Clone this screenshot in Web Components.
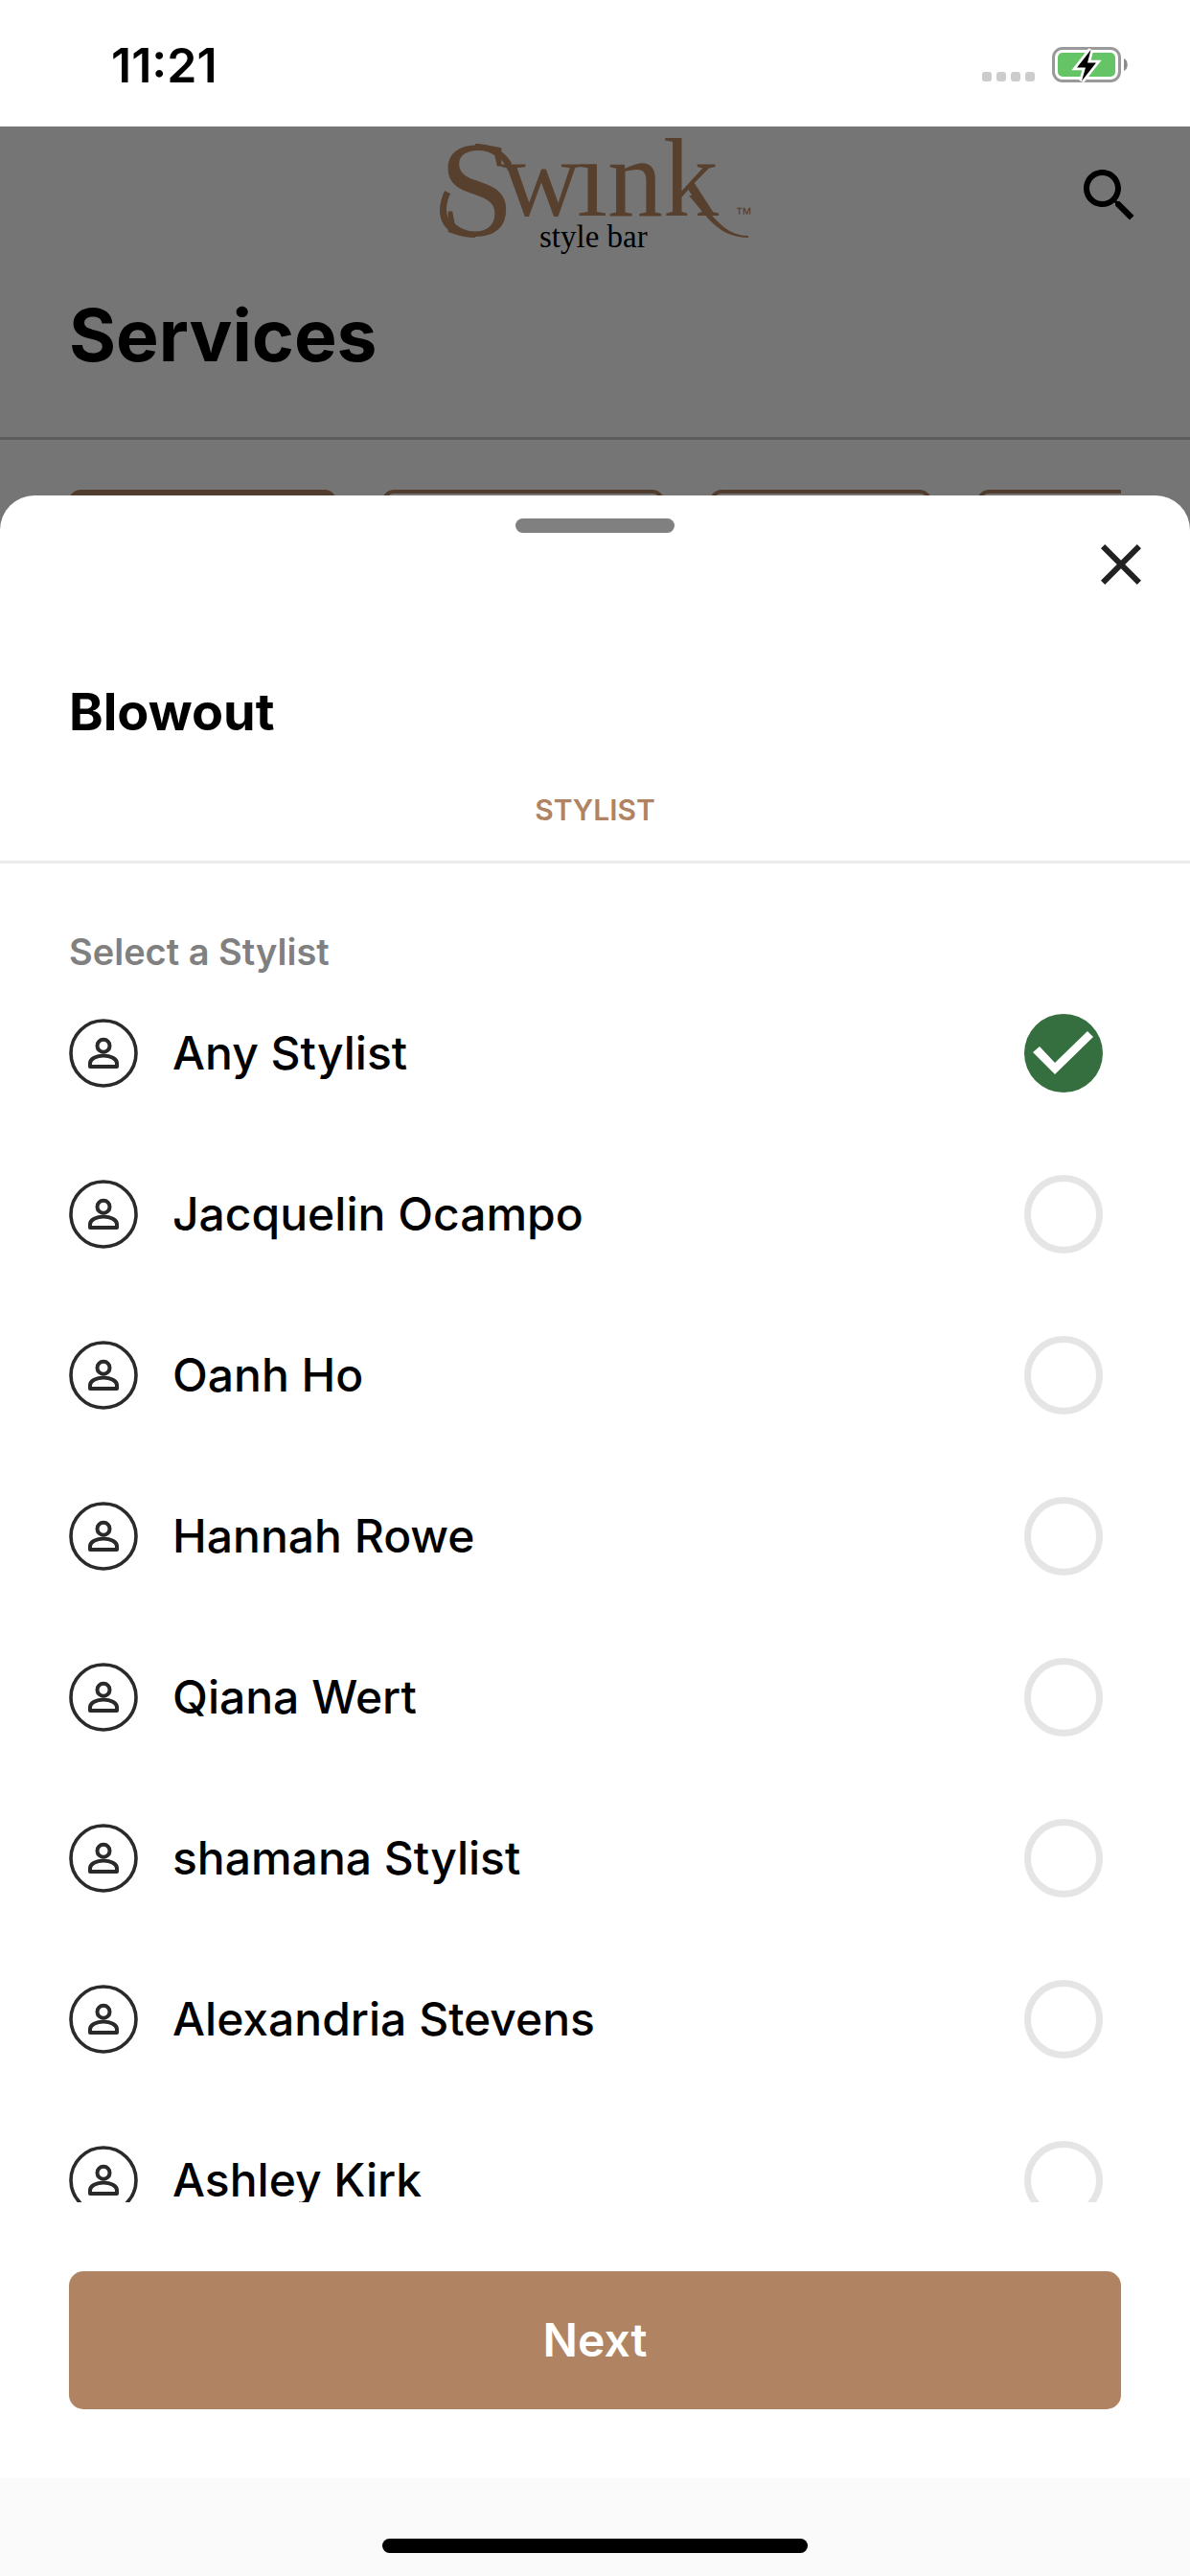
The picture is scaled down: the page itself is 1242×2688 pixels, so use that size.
<!DOCTYPE html>
<html lang="en">
<head>
<meta charset="utf-8">
<meta name="viewport" content="width=device-width, initial-scale=1">
<title>Swink style bar – Services</title>
<style>
  :root {
    --brand: #b08463;
    --ink: #212121;
    --muted: #808080;
    --gutter: 72px;
  }
  body { margin: 0; background: #fff; color: #000; font-family: Inter, "Liberation Sans", sans-serif; }
</style>
</head>
<body>
<app-shell>
  <status-bar slot="status" time="11:21"></status-bar>
  <services-page slot="page"></services-page>
  <booking-sheet slot="sheet" heading="Blowout" step="Stylist">
    <stylist-picker></stylist-picker>
  </booking-sheet>
</app-shell>

<script>
const define = (name, html, setup) => {
  const template = document.createElement('template');
  template.innerHTML = html;
  customElements.define(name, class extends HTMLElement {
    connectedCallback() {
      if (this.shadowRoot) return;
      const root = this.attachShadow({ mode: 'open' });
      root.append(template.content.cloneNode(true));
      if (setup) setup(this, root);
    }
  });
};

define('app-shell', `
  <style>
    :host { display: flex; flex-direction: column; height: 100vh; }
    main { flex: 1; min-height: 0; display: grid; grid-template: minmax(0, 1fr) / minmax(0, 1fr); }
    .scrim { grid-area: 1 / 1; background: rgba(0, 0, 0, .54); z-index: 1; }
    ::slotted([slot="page"]) { grid-area: 1 / 1; min-height: 0; }
    ::slotted([slot="sheet"]) { grid-area: 1 / 1; z-index: 2; margin-top: 385px; min-height: 0; }
  </style>
  <slot name="status"></slot>
  <main>
    <slot name="page"></slot>
    <div class="scrim"></div>
    <slot name="sheet"></slot>
  </main>`);

define('status-bar', `
  <style>
    :host { display: flex; justify-content: space-between; align-items: center; height: 132px; padding: 0 64px 0 116px; background: #fff; }
    time { font-size: 50px; line-height: 60px; font-weight: 600; padding-top: 4px; }
    .icons { display: flex; align-items: flex-end; gap: 18px; padding-top: 4px; }
    .signal { display: flex; gap: 5px; padding-bottom: 3px; }
    .signal i { width: 10px; height: 10px; border-radius: 3px; background: #ccc; }
    svg { display: block; }
  </style>
  <time></time>
  <div class="icons">
    <div class="signal"><i></i><i></i><i></i><i></i></div>
    <svg width="80" height="40" viewBox="0 0 80 40" aria-label="Battery charging">
      <rect x="1.5" y="2.5" width="69" height="34" rx="9.5" fill="none" stroke="#999" stroke-width="3"/>
      <rect x="6" y="7" width="60" height="25" rx="5" fill="#65c466"/>
      <path d="M75 13c5 2 5 11 0 13z" fill="#8c8c8c"/>
      <path d="M40.500 4 26 22.500h9L31 36.500 46 17.500H37z" fill="#000" stroke="#fff" stroke-width="5.500" paint-order="stroke"/>
    </svg>
  </div>`, (el, root) => { root.querySelector('time').textContent = el.getAttribute('time'); });

define('swink-logo', `
  <style>:host { display: block; } svg { display: block; overflow: visible; }</style>
  <svg width="330" height="144" viewBox="456 132 330 144" role="img" aria-label="Swink style bar">
    <g fill="#c08c66" font-family="'Liberation Serif', serif">
      <text y="246" font-size="142"><tspan x="458">S</tspan><tspan x="523" y="225" font-size="116">w</tspan><tspan x="602" y="225" font-size="116">i</tspan><tspan x="634" y="225" font-size="116">n</tspan><tspan x="692" y="225" font-size="116">k</tspan></text>
      <path d="M496 150c18 0 30 7 38 20l-4 8c-8-17-18-25-34-25z"/>
      <path d="M464 199l6 3c-8 18-6 37 26 44v2c-32 0-45-20-32-49z"/>
      <path d="M724 204l22 24c11 12 21 18 35 18v2c-17 0-30-7-42-20l-20-24z"/>
      <text x="767" y="229" font-size="18" font-family="'Liberation Sans', sans-serif">™</text>
    </g>
    <rect x="607" y="136" width="22" height="30" fill="#fff"/>
    <text x="563" y="258" font-size="33" font-family="'Liberation Serif', serif" fill="#000">style bar</text>
  </svg>`);

define('category-chip', `
  <style>
    :host { display: block; flex: none; }
    button { display: block; width: 100%; height: 96px; border: 4px solid var(--brand); border-radius: 12px; background: #fff; padding: 0; }
    :host([selected]) button { background: var(--brand); }
  </style>
  <button type="button" aria-label="Category"></button>`);

define('services-page', `
  <style>
    :host { display: block; background: #fff; overflow: hidden; }
    .bar { display: grid; grid-template-columns: 1fr auto 1fr; align-items: center; height: 144px; padding: 0 48px; }
    .bar swink-logo { grid-column: 2; }
    .bar button { grid-column: 3; justify-self: end; border: 0; padding: 0; background: none; }
    svg { display: block; }
    header { border-bottom: 3px solid #c8c8c8; }
    h1 { margin: 0; padding: 26px var(--gutter) 58px; font-size: 75px; line-height: 96px; font-weight: 700; }
    nav { display: flex; gap: 48px; margin: 52px var(--gutter) 0; overflow: hidden; }
    .a { width: 279px; } .b { width: 294px; } .c { width: 231px; } .d { width: 260px; }
  </style>
  <header>
    <div class="bar">
      <swink-logo></swink-logo>
      <button type="button" aria-label="Search">
        <svg width="72" height="72" viewBox="0 0 24 24"><path d="M15.500 14h-.79l-.28-.27C15.410 12.590 16 11.110 16 9.500 16 5.910 13.090 3 9.500 3S3 5.910 3 9.500 5.910 16 9.500 16c1.610 0 3.090-.59 4.230-1.570l.27.28v.79l5 4.990L20.490 19l-4.990-5zm-6 0C7.010 14 5 11.990 5 9.500S7.010 5 9.500 5 14 7.010 14 9.500 11.990 14 9.500 14z"/></svg>
      </button>
    </div>
    <h1>Services</h1>
  </header>
  <nav>
    <category-chip class="a" selected></category-chip>
    <category-chip class="b"></category-chip>
    <category-chip class="c"></category-chip>
    <category-chip class="d"></category-chip>
  </nav>`);

define('booking-sheet', `
  <style>
    :host { display: flex; flex-direction: column; background: #fff; border-radius: 36px 36px 0 0; overflow: hidden; }
    .top { display: grid; grid-template-columns: 1fr auto 1fr; align-items: start; padding-right: 36px; padding-left: 36px; }
    .handle { grid-column: 2; width: 166px; height: 15px; margin-top: 24px; border-radius: 8px; background: var(--muted); }
    .close { grid-column: 3; justify-self: end; margin-top: 36px; border: 0; padding: 0; background: none; }
    svg { display: block; }
    h2 { margin: 0; padding: 82px var(--gutter) 48px; font-size: 54px; line-height: 72px; font-weight: 700; }
    .step { margin: 0; padding-bottom: 35px; border-bottom: 3px solid #ebebeb; text-align: center; text-transform: uppercase; color: var(--brand); font-size: 30px; line-height: 36px; font-weight: 600; }
    .content { flex: 1; min-height: 0; display: flex; flex-direction: column; }
    .next { flex: none; height: 144px; margin: 72px var(--gutter); border: 0; border-radius: 15px; background: var(--brand); color: #fff; font: 600 48px/60px Inter, "Liberation Sans", sans-serif; }
    footer { flex: none; display: flex; justify-content: center; align-items: flex-end; height: 102px; padding-bottom: 24px; box-sizing: border-box; background: #fafafa; }
    footer i { width: 444px; height: 15px; border-radius: 8px; background: #000; }
  </style>
  <div class="top">
    <div class="handle"></div>
    <button class="close" type="button" aria-label="Close">
      <svg width="72" height="72" viewBox="0 0 24 24" fill="#212121"><path d="M19 6.410 17.590 5 12 10.590 6.410 5 5 6.410 10.590 12 5 17.590 6.410 19 12 13.410 17.590 19 19 17.590 13.410 12z"/></svg>
    </button>
  </div>
  <h2></h2>
  <p class="step"></p>
  <div class="content"><slot></slot></div>
  <button class="next" type="button">Next</button>
  <footer><i></i></footer>`, (el, root) => {
    root.querySelector('h2').textContent = el.getAttribute('heading');
    root.querySelector('.step').textContent = el.getAttribute('step');
  });

define('user-avatar', `
  <style>:host { display: block; flex: none; } svg { display: block; }</style>
  <svg width="72" height="72" viewBox="0 0 72 72" fill="none" stroke="#2a2a2a" stroke-width="4" aria-hidden="true">
    <circle cx="36" cy="36" r="34" stroke-width="3.600"/>
    <circle cx="36" cy="28.200" r="6.500"/>
    <path d="M22 50v-3.500c0-4.500 6.500-8 14-8s14 3.500 14 8v3.500z" stroke-linejoin="round"/>
  </svg>`);

define('stylist-picker', `
  <style>
    :host { display: flex; flex-direction: column; flex: 1; min-height: 0; }
    h3 { margin: 0; padding: 70px var(--gutter) 0; font-size: 38px; line-height: 44px; font-weight: 600; color: var(--muted); }
    .list { flex: 1; min-height: 0; overflow-y: auto; scrollbar-width: none; }
    label { display: flex; align-items: center; gap: 36px; height: 168px; padding: 0 91px 0 var(--gutter); font-size: 48px; line-height: 60px; font-weight: 500; }
    .name { flex: 1; }
    input { appearance: none; flex: none; box-sizing: border-box; width: 82px; height: 82px; margin: 0; border: 7px solid #e5e5e5; border-radius: 50%; }
    input:checked { border: 0; background: #356e3f; }
    input:checked::after { content: ""; display: block; width: 82px; height: 82px; background: #fff;
      clip-path: polygon(9px 40px, 16px 34px, 32px 51px, 66px 18px, 72px 24px, 32px 63px); }
  </style>
  <h3 id="title">Select a Stylist</h3>
  <div class="list" role="radiogroup" aria-labelledby="title"></div>`, (el, root) => {
    const names = ['Any Stylist', 'Jacquelin Ocampo', 'Oanh Ho', 'Hannah Rowe', 'Qiana Wert',
      'shamana Stylist', 'Alexandria Stevens', 'Ashley Kirk'];
    root.querySelector('.list').innerHTML = names.map((name, i) => `
      <label for="s${i}"><user-avatar></user-avatar><span class="name">${name}</span>
      <input type="radio" name="stylist" id="s${i}" value="${name}"${i ? '' : ' checked'}></label>`).join('');
  });
</script>
</body>
</html>
